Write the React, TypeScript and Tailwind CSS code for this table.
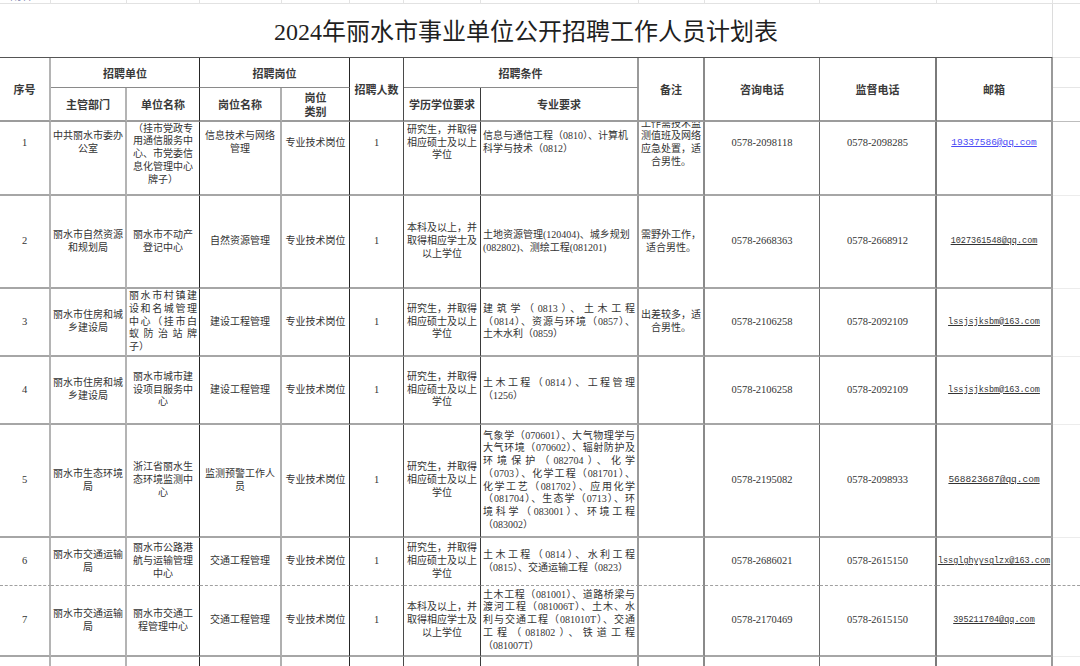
import React from "react";

const COLS =
  "grid grid-cols-[51px_76px_73px_82px_68px_54px_77px_158px_66px_115px_117px_116px_27px]";

const VR = [
  "border-r-2 border-r-[#b4b4b4]",
  "border-r-2 border-r-[#b4b4b4]",
  "border-r border-r-[#262626]",
  "border-r-2 border-r-[#b0b0b0]",
  "border-r border-r-[#262626]",
  "border-r border-r-[#4a4a4a]",
  "border-r border-r-[#3a3a3a]",
  "border-r-2 border-r-[#9a9a9a]",
  "border-r-2 border-r-[#8a8a8a]",
  "border-r border-r-[#6a6a6a]",
  "border-r-2 border-r-[#7a7a7a]",
  "border-r-2 border-r-[#9a9a9a]",
  "",
];

const LIGHT_R = "border-r border-r-[#e3e3e3]";

type Align = "c" | "l" | "j";

interface RowDef {
  h: string;
  pb: string;
  unitPb?: string;
  no: string;
  dept: string[];
  unit: string[];
  unitA: Align;
  post: string[];
  edu: string[];
  major: string[];
  majorA: Align;
  note: string[];
  tel1: string;
  tel2: string;
  email: string;
  emailCls: string;
  bottom: string;
  rightBottom: string;
}

const BODY_B = "border-b-2 border-b-[#a6a6a6]";
const DASH_B = "border-b [border-bottom-style:dashed] border-b-[#a0a0a0]";
const RIGHT_B = "border-b border-b-[#ececec]";

const EDU_G = ["研究生，并取得", "相应硕士及以上", "学位"];
const EDU_B = ["本科及以上，并", "取得相应学士及", "以上学位"];

const ROWS: RowDef[] = [
  {
    h: "h-[74px]",
    pb: "pb-[30px]",
    unitPb: "pb-[7px]",
    no: "1",
    dept: ["中共丽水市委办", "公室"],
    unit: ["（挂市党政专", "用通信服务中", "心、市党委信", "息化管理中心", "牌子）"],
    unitA: "c",
    post: ["信息技术与网络", "管理"],
    edu: EDU_G,
    major: ["信息与通信工程（0810）、计算机", "科学与技术（0812）"],
    majorA: "l",
    note: ["工作需技术监", "测值班及网络", "应急处置，适", "合男性。"],
    tel1: "0578-2098118",
    tel2: "0578-2098285",
    email: "19337586@qq.com",
    emailCls: "text-[9.5px] text-[#4b4bf5] decoration-[#4b4bf5]",
    bottom: BODY_B,
    rightBottom: RIGHT_B,
  },
  {
    h: "h-[93px]",
    pb: "",
    no: "2",
    dept: ["丽水市自然资源", "和规划局"],
    unit: ["丽水市不动产", "登记中心"],
    unitA: "c",
    post: ["自然资源管理"],
    edu: EDU_B,
    major: ["土地资源管理(120404)、城乡规划", "(082802)、测绘工程(081201)"],
    majorA: "l",
    note: ["需野外工作，", "适合男性。"],
    tel1: "0578-2668363",
    tel2: "0578-2668912",
    email: "1027361548@qq.com",
    emailCls: "text-[8.5px]",
    bottom: BODY_B,
    rightBottom: RIGHT_B,
  },
  {
    h: "h-[68px]",
    pb: "",
    no: "3",
    dept: ["丽水市住房和城", "乡建设局"],
    unit: ["丽水市村镇建", "设和名城管理", "中心（挂市白", "蚁防治站牌", "子）"],
    unitA: "j",
    post: ["建设工程管理"],
    edu: EDU_G,
    major: ["建筑学（0813）、土木工程", "（0814）、资源与环境（0857）、", "土木水利（0859）"],
    majorA: "j",
    note: ["出差较多，适", "合男性。"],
    tel1: "0578-2106258",
    tel2: "0578-2092109",
    email: "lssjsjksbm@163.com",
    emailCls: "text-[8.5px]",
    bottom: BODY_B,
    rightBottom: RIGHT_B,
  },
  {
    h: "h-[68px]",
    pb: "",
    no: "4",
    dept: ["丽水市住房和城", "乡建设局"],
    unit: ["丽水市城市建", "设项目服务中", "心"],
    unitA: "c",
    post: ["建设工程管理"],
    edu: EDU_G,
    major: ["土木工程（0814）、工程管理", "（1256）"],
    majorA: "j",
    note: [],
    tel1: "0578-2106258",
    tel2: "0578-2092109",
    email: "lssjsjksbm@163.com",
    emailCls: "text-[8.5px]",
    bottom: BODY_B,
    rightBottom: RIGHT_B,
  },
  {
    h: "h-[113px]",
    pb: "",
    no: "5",
    dept: ["丽水市生态环境", "局"],
    unit: ["浙江省丽水生", "态环境监测中", "心"],
    unitA: "c",
    post: ["监测预警工作人", "员"],
    edu: EDU_G,
    major: [
      "气象学（070601）、大气物理学与",
      "大气环境（070602）、辐射防护及",
      "环境保护（082704）、化学",
      "（0703）、化学工程（081701）、",
      "化学工艺（081702）、应用化学",
      "（081704）、生态学（0713）、环",
      "境科学（083001）、环境工程",
      "（083002）",
    ],
    majorA: "j",
    note: [],
    tel1: "0578-2195082",
    tel2: "0578-2098933",
    email: "568823687@qq.com",
    emailCls: "text-[9.5px]",
    bottom: BODY_B,
    rightBottom: RIGHT_B,
  },
  {
    h: "h-[48px]",
    pb: "",
    no: "6",
    dept: ["丽水市交通运输", "局"],
    unit: ["丽水市公路港", "航与运输管理", "中心"],
    unitA: "c",
    post: ["交通工程管理"],
    edu: EDU_G,
    major: ["土木工程（0814）、水利工程", "（0815）、交通运输工程（0823）"],
    majorA: "j",
    note: [],
    tel1: "0578-2686021",
    tel2: "0578-2615150",
    email: "lssglghyysglzx@163.com",
    emailCls: "text-[8.5px]",
    bottom: DASH_B,
    rightBottom: DASH_B,
  },
  {
    h: "h-[71px]",
    pb: "",
    no: "7",
    dept: ["丽水市交通运输", "局"],
    unit: ["丽水市交通工", "程管理中心"],
    unitA: "c",
    post: ["交通工程管理"],
    edu: EDU_B,
    major: [
      "土木工程（081001）、道路桥梁与",
      "渡河工程（081006T）、土木、水",
      "利与交通工程（081010T）、交通",
      "工程（081802）、铁道工程",
      "（081007T）",
    ],
    majorA: "j",
    note: [],
    tel1: "0578-2170469",
    tel2: "0578-2615150",
    email: "395211704@qq.com",
    emailCls: "text-[8.5px]",
    bottom: BODY_B,
    rightBottom: RIGHT_B,
  },
];

function Lines({ lines, a }: { lines: string[]; a: Align }) {
  return (
    <div className="px-[2px]">
      {lines.map((t, i) => {
        const last = i === lines.length - 1;
        const cls =
          a === "c"
            ? "text-center whitespace-nowrap"
            : a === "l"
            ? "text-left whitespace-nowrap"
            : last
            ? "text-left whitespace-nowrap"
            : "text-justify [text-align-last:justify]";
        return (
          <div key={i} className={cls}>
            {t}
          </div>
        );
      })}
    </div>
  );
}

function Cell({
  col,
  bottom,
  extra = "",
  children,
}: {
  col: number;
  bottom: string;
  extra?: string;
  children?: React.ReactNode;
}) {
  return (
    <div className={`flex min-w-0 flex-col justify-center overflow-hidden ${VR[col]} ${bottom} ${extra}`}>
      {children}
    </div>
  );
}

function BodyRow({ r }: { r: RowDef }) {
  const b = r.bottom;
  const pb = r.pb;
  return (
    <div className={`${COLS} ${r.h}`}>
      <Cell col={0} bottom={b} extra={pb}>
        <div className="text-center text-[10.5px]">{r.no}</div>
      </Cell>
      <Cell col={1} bottom={b} extra={pb}>
        <Lines lines={r.dept} a="c" />
      </Cell>
      <Cell col={2} bottom={b} extra={r.unitPb ?? pb}>
        <Lines lines={r.unit} a={r.unitA} />
      </Cell>
      <Cell col={3} bottom={b} extra={pb}>
        <Lines lines={r.post} a="c" />
      </Cell>
      <Cell col={4} bottom={b} extra={pb}>
        <Lines lines={["专业技术岗位"]} a="c" />
      </Cell>
      <Cell col={5} bottom={b} extra={pb}>
        <div className="text-center text-[10.5px]">1</div>
      </Cell>
      <Cell col={6} bottom={b} extra={pb}>
        <Lines lines={r.edu} a="c" />
      </Cell>
      <Cell col={7} bottom={b} extra={pb}>
        <Lines lines={r.major} a={r.majorA} />
      </Cell>
      <Cell col={8} bottom={b} extra={pb}>
        <Lines lines={r.note} a="c" />
      </Cell>
      <Cell col={9} bottom={b} extra={pb}>
        <div className="text-center text-[10.5px]">{r.tel1}</div>
      </Cell>
      <Cell col={10} bottom={b} extra={pb}>
        <div className="text-center text-[10.5px]">{r.tel2}</div>
      </Cell>
      <Cell col={11} bottom={b} extra={pb}>
        <div
          className={`whitespace-nowrap text-center font-['Liberation_Mono',monospace] underline underline-offset-[1px] ${r.emailCls}`}
        >
          {r.email}
        </div>
      </Cell>
      <div className={r.rightBottom} />
    </div>
  );
}

function HCell({ pos, col, bottom, children }: { pos: string; col: number; bottom: string; children: React.ReactNode }) {
  return (
    <div
      className={`flex flex-col items-center justify-center text-center ${pos} ${VR[col]} ${bottom}`}
    >
      {children}
    </div>
  );
}

export default function App() {
  const HB = "border-b-2 border-b-[#9c9c9c]";
  const H1 = "border-b border-b-[#8a8a8a]";
  return (
    <div className="h-[666px] w-[1080px] overflow-hidden bg-white font-['Liberation_Serif','Noto_Sans_CJK_SC',sans-serif] text-[10px] leading-[12.7px] text-[#333]">
      {/* top strip */}
      <div className={`${COLS} h-[4px]`}>
        {Array.from({ length: 13 }).map((_, i) => (
          <div key={i} className={`overflow-hidden border-b border-b-[#e2e2e2] ${i < 12 ? LIGHT_R : ""}`}>
            {i === 0 && (
              <div className="-mt-[11px] pl-[10px] text-[12px] leading-[14px] text-[#8a90b8]">附件1</div>
            )}
          </div>
        ))}
      </div>

      {/* title */}
      <div className={`${COLS} h-[54px]`}>
        <div className="col-span-12 flex items-center justify-center border-r border-b border-r-[#dcdcdc] border-b-[#555] pt-[3px] text-[24px] leading-[28px] text-[#1f1f1f]">
          2024年丽水市事业单位公开招聘工作人员计划表
        </div>
        <div className="border-b border-b-[#e6e6e6]" />
      </div>

      {/* header */}
      <div
        className={`${COLS} grid-rows-[30px_34px] font-['Noto_Sans_CJK_SC',sans-serif] text-[11px] font-bold leading-[14px] text-[#3a3a3a]`}
      >
        <HCell pos="col-start-1 col-end-2 row-start-1 row-end-3" col={0} bottom={HB}>
          序号
        </HCell>
        <HCell pos="col-start-2 col-end-4 row-start-1 row-end-2" col={2} bottom={H1}>
          招聘单位
        </HCell>
        <HCell pos="col-start-4 col-end-6 row-start-1 row-end-2" col={4} bottom={H1}>
          招聘岗位
        </HCell>
        <HCell pos="col-start-6 col-end-7 row-start-1 row-end-3" col={5} bottom={HB}>
          招聘人数
        </HCell>
        <HCell pos="col-start-7 col-end-9 row-start-1 row-end-2" col={7} bottom={H1}>
          招聘条件
        </HCell>
        <HCell pos="col-start-9 col-end-10 row-start-1 row-end-3" col={8} bottom={HB}>
          备注
        </HCell>
        <HCell pos="col-start-10 col-end-11 row-start-1 row-end-3" col={9} bottom={HB}>
          咨询电话
        </HCell>
        <HCell pos="col-start-11 col-end-12 row-start-1 row-end-3" col={10} bottom={HB}>
          监督电话
        </HCell>
        <HCell pos="col-start-12 col-end-13 row-start-1 row-end-3" col={11} bottom={HB}>
          邮箱
        </HCell>
        <div className="col-start-13 col-end-14 row-start-1 row-end-2 border-b border-b-[#e6e6e6]" />
        <div className="col-start-13 col-end-14 row-start-2 row-end-3 border-b border-b-[#bdbdbd]" />

        <HCell pos="col-start-2 col-end-3 row-start-2 row-end-3" col={1} bottom={HB}>
          主管部门
        </HCell>
        <HCell pos="col-start-3 col-end-4 row-start-2 row-end-3" col={2} bottom={HB}>
          单位名称
        </HCell>
        <HCell pos="col-start-4 col-end-5 row-start-2 row-end-3" col={3} bottom={HB}>
          岗位名称
        </HCell>
        <HCell pos="col-start-5 col-end-6 row-start-2 row-end-3" col={4} bottom={HB}>
          <span>岗位</span>
          <span>类别</span>
        </HCell>
        <HCell pos="col-start-7 col-end-8 row-start-2 row-end-3" col={6} bottom={HB}>
          学历学位要求
        </HCell>
        <HCell pos="col-start-8 col-end-9 row-start-2 row-end-3" col={7} bottom={HB}>
          专业要求
        </HCell>
      </div>

      {ROWS.map((r) => (
        <BodyRow key={r.no} r={r} />
      ))}

      {/* partial next row */}
      <div className={`${COLS} h-[40px]`}>
        {Array.from({ length: 13 }).map((_, i) => (
          <div key={i} className={i < 12 ? VR[i] : ""} />
        ))}
      </div>
    </div>
  );
}
